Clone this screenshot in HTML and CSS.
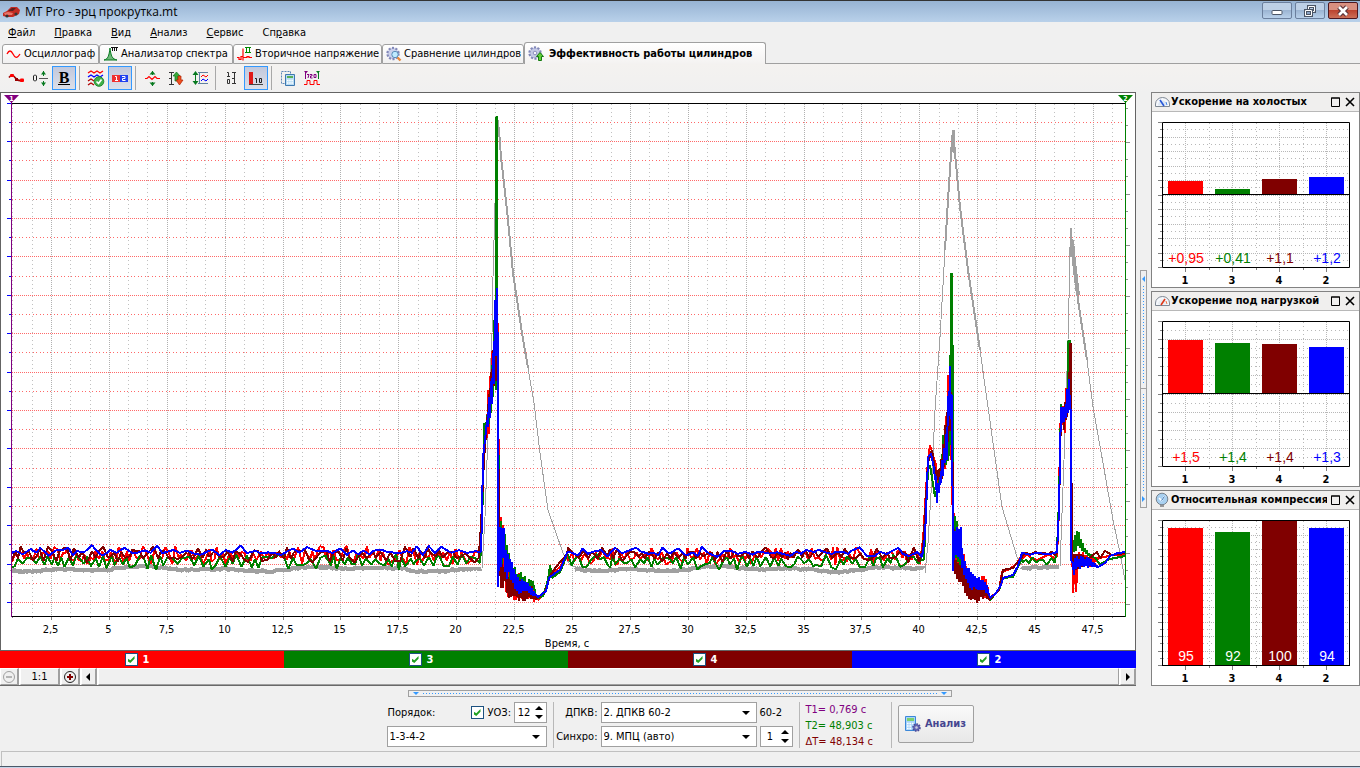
FILE: index.html
```html
<!DOCTYPE html>
<html lang="ru">
<head>
<meta charset="utf-8">
<title>MT Pro - эрц прокрутка.mt</title>
<link rel="stylesheet" href="styles.css">
</head>
<body>
<header class="titlebar">
  <svg class="app-icon" width="18" height="16" viewBox="0 0 18 16"><path d="M1 9l4-2 4-4h6l3 3-1 4-6 3H5l-4-1z" fill="#c22b22"/><path d="M6 7l4-3h4l-3 3z" fill="#5a2020"/><path d="M2 9l4-1 5 1-1 2H3z" fill="#e87468"/><circle cx="5" cy="12" r="1.600" fill="#333"/><circle cx="14" cy="10" r="1.600" fill="#333"/></svg>
  <h1 class="title">MT Pro - эрц прокрутка.mt</h1>
  <div class="window-buttons">
    <button class="win-btn" aria-label="Свернуть"><svg width="12" height="12" viewBox="0 0 12 12"><rect x="1" y="5.500" width="10" height="4" rx="1" fill="#fff" stroke="#4b5566"/></svg></button>
    <button class="win-btn" aria-label="Восстановить"><svg width="12" height="12" viewBox="0 0 12 12"><path d="M4.500 1.500h6v5h-6z" fill="none" stroke="#4b5566" stroke-width="3"/><path d="M4.500 1.500h6v5h-6z" fill="none" stroke="#fff"/><path d="M1.500 5.500h6v5h-6z" fill="#8ba3c4" stroke="#4b5566" stroke-width="3"/><path d="M1.500 5.500h6v5h-6z" fill="none" stroke="#fff"/></svg></button>
    <button class="win-btn close" aria-label="Закрыть"><svg width="12" height="12" viewBox="0 0 12 12"><path d="M2 2l8 8M10 2l-8 8" stroke="#5b3338" stroke-width="5"/><path d="M2 2l8 8M10 2l-8 8" stroke="#fff" stroke-width="2.600"/></svg></button>
  </div>
</header>

<nav class="menu">
  <button class="menu-item"><u>Ф</u>айл</button>
  <button class="menu-item"><u>П</u>равка</button>
  <button class="menu-item"><u>В</u>ид</button>
  <button class="menu-item"><u>А</u>нализ</button>
  <button class="menu-item"><u>С</u>ервис</button>
  <button class="menu-item">Сп<u>р</u>авка</button>
</nav>

<nav class="tabs">
  <button class="tab tab-scope"><svg width="16" height="16" viewBox="0 0 16 16"><path d="M1 8c2-4 4-4 6 0s4 5 7 0" fill="none" stroke="#f00" stroke-width="1.300"/></svg>Осциллограф</button>
  <button class="tab tab-spectrum"><svg width="16" height="16" viewBox="0 0 16 16"><path d="M1 14c4-1 5-4 6-12 1 8 2 11 7 12z" fill="#6fb87a" stroke="#087a20"/><path d="M8 1.500h7M9.500 1v4M11.500 1v4M13.500 1v4" stroke="#111" fill="none"/></svg>Анализатор спектра</button>
  <button class="tab tab-secondary"><svg width="16" height="16" viewBox="0 0 16 16"><path d="M0 11.500h2v2h2v-3h2V2.500v12M6 11.500h4v-1h2v1h3" fill="none" stroke="#f00" stroke-width="1.200"/><path d="M8 1.500h6M8 6.500h6M9.500 1v6M12.500 1v6" stroke="#080"/></svg>Вторичное напряжение</button>
  <button class="tab tab-compare"><svg width="16" height="16" viewBox="0 0 16 16"><circle cx="7" cy="7.500" r="5.400" fill="#b9bfe2" stroke="#8187b8" stroke-width="2.600" stroke-dasharray="2 1.400"/><circle cx="7" cy="7.500" r="4.600" fill="#ccd1ec"/><circle cx="9" cy="8.500" r="3.200" fill="#bfeaff" stroke="#5a8db8"/><path d="M11.500 11.500l3 3" stroke="#e8883a" stroke-width="2.400"/></svg>Сравнение цилиндров</button>
  <button class="tab tab-active"><svg width="16" height="16" viewBox="0 0 16 16"><circle cx="7" cy="7" r="5.400" fill="#b9bfe2" stroke="#8187b8" stroke-width="2.600" stroke-dasharray="2 1.400"/><circle cx="7" cy="7" r="4.600" fill="#c4c9e6"/><circle cx="7" cy="7" r="1.800" fill="#f4f4fb" stroke="#8b90be"/><path d="M12 6.500l3.500 4h-2v4h-3v-4h-2z" fill="#5fd038" stroke="#147a10"/></svg>Эффективность работы цилиндров</button>
  <div class="tabs-rest"></div>
</nav>

<div class="toolbar">
  <button class="tool" aria-label="Кривая"><svg width="18" height="18" viewBox="0 0 18 18"><path d="M2 8.500c2-3 4-3 6 0s4 4 8 2.500" fill="none" stroke="#a00000" stroke-width="1.600"/><rect x="3" y="5" width="4" height="3" rx="1" fill="#f00"/><rect x="13" y="9.500" width="4" height="3.500" rx="1" fill="#f00"/><rect x="8" y="9" width="3" height="3" fill="#900"/></svg></button>
  <button class="tool" aria-label="Ноль"><svg width="18" height="18" viewBox="0 0 18 18"><path d="M3.500 6h1l1 1v4l-1 1h-1l-1-1V7z" fill="none" stroke="#222"/><path d="M8 9.500h9" stroke="#555"/><path d="M12.500 2v5M12.500 12v5" stroke="#087a20"/><path d="M10 5.500l2.500-3.500 2.500 3.500zM10 13.500l2.500 3.500 2.500-3.500z" fill="#087a20"/></svg></button>
  <button class="tool pressed" aria-label="Полужирный"><b class="bold-glyph">B</b></button>
  <span class="sep"></span>
  <button class="tool" aria-label="Кривые"><svg width="18" height="18" viewBox="0 0 18 18"><g fill="none" stroke-width="1.300"><path d="M1 4l3-2 3 2 3-2 3 2 3-2" stroke="#f00"/><path d="M1 8l3-2 3 2 3-2 3 2 3-2" stroke="#00f"/><path d="M1 12l3-2 3 2" stroke="#b00000"/><path d="M1 16l3-2 3 2" stroke="#b00000"/></g><circle cx="12" cy="12.500" r="4.800" fill="#3fb04a" stroke="#238a30"/><path d="M9.500 12.500l2 2 3-4" fill="none" stroke="#fff" stroke-width="1.700"/></svg></button>
  <button class="tool pressed" aria-label="Цилиндры"><svg width="18" height="18" viewBox="0 0 18 18"><path d="M1 6h8v7H1z" fill="#f03030"/><path d="M9 6h8v7H9z" fill="#2040f0"/><path d="M4 7.500h1.500V12M4 11.500h3M11 7.500h3v2h-2.500v2H14.500" stroke="#fff" fill="none"/></svg></button>
  <span class="sep"></span>
  <button class="tool" aria-label="Масштаб по вертикали"><svg width="18" height="18" viewBox="0 0 18 18"><path d="M2 9.500h2l2-2 3 3 3-3 2 2h3" fill="none" stroke="#f00" stroke-width="1.200"/><path d="M9.500 2v4M9.500 13v4" stroke="#087a20"/><path d="M6.500 5.500l3-3.500 3 3.500zM6.500 13.500l3 3.500 3-3.500z" fill="#087a20"/></svg></button>
  <button class="tool" aria-label="Сдвиг"><svg width="18" height="18" viewBox="0 0 18 18"><path d="M4.500 3v12M2 3.500h5M2 9.500h2M2 15.500h5" stroke="#333"/><path d="M6 7l3.500-4L13 7h-2v5H8V7z" fill="#38a838" stroke="#087a20" stroke-width=".700"/><path d="M9 11h2V7h3v4h2l-3.500 5z" fill="#f05020" stroke="#b02000" stroke-width=".700"/></svg></button>
  <button class="tool" aria-label="Диапазон"><svg width="18" height="18" viewBox="0 0 18 18"><path d="M4.500 3v12" stroke="#087a20"/><path d="M1.500 6l3-4 3 4zM1.500 12l3 4 3-4z" fill="#087a20"/><path d="M7 3.500h10M7 14.500h10M8.500 3v12" stroke="#6080a0"/><path d="M10 8l2-2 3 2 2-2" fill="none" stroke="#f00"/><path d="M10 12l2-2 3 2 2-2" fill="none" stroke="#00f"/></svg></button>
  <span class="sep"></span>
  <button class="tool" aria-label="Шкала"><svg width="18" height="18" viewBox="0 0 18 18"><path d="M4 3.500h1.500V7M4 7.500h3M4.500 10.500h2v4h-2zM11.500 3v12M9 3.500h4M9 9.500h2M9 14.500h4" fill="none" stroke="#333"/></svg></button>
  <button class="tool pressed" aria-label="Значения"><svg width="18" height="18" viewBox="0 0 18 18"><path d="M2 3h4v12H2z" fill="#e01818"/><path d="M2 15.500h14" stroke="#444"/><path d="M8 9.500h1.500V14M12.500 9.500h2v4h-2z" stroke="#222" fill="none"/></svg></button>
  <span class="sep"></span>
  <button class="tool" aria-label="Расчёт"><svg width="18" height="18" viewBox="0 0 18 18"><path d="M2.500 2.500h9v12h-9z" fill="none" stroke="#5b87b8" stroke-dasharray="2 1"/><path d="M6.500 5.500h9v11h-9z" fill="#b8dcf4" stroke="#3d78b0"/><path d="M8 7h6v2H8z" fill="#58b058"/><path d="M8 11.500h6M8 14h6" stroke="#fff" stroke-width="1.500" stroke-dasharray="1.500 .700"/></svg></button>
  <button class="tool" aria-label="720 градусов"><svg width="18" height="18" viewBox="0 0 18 18"><path d="M1 2h4L3 4.500z" fill="#800080"/><path d="M2.500 2v8" stroke="#800080"/><path d="M15.500 2v8" stroke="#087a20"/><path d="M13 2h4l-2 2.500z" fill="#087a20"/><path d="M4 5.500h2L5 9M7 5.500h2v1.500H7.500v2h2M11 5.500h2v3h-2z" stroke="#800080" fill="none"/><path d="M1 15.500h3v-4h3v4h4v-4h3v4h3" fill="none" stroke="#f00"/></svg></button>
</div>

<main class="workspace">
  <section class="scope">
    <svg class="scope-chart" id="scope" viewBox="1 93 1134 557" role="img" aria-label="Эффективность работы цилиндров"></svg>
    <div class="legend">
      <label class="legend-item c1"><input type="checkbox" class="check" checked>1</label>
      <label class="legend-item c3"><input type="checkbox" class="check" checked>3</label>
      <label class="legend-item c4"><input type="checkbox" class="check" checked>4</label>
      <label class="legend-item c2"><input type="checkbox" class="check" checked>2</label>
    </div>
    <div class="zoombar">
      <button class="zoom-btn" aria-label="Уменьшить" disabled><svg width="14" height="14" viewBox="0 0 14 14"><circle cx="7" cy="7" r="5.500" fill="none" stroke="#a0a0a0"/><path d="M4 7h6" stroke="#a0a0a0" stroke-width="1.500"/></svg></button>
      <button class="zoom-btn ratio">1:1</button>
      <button class="zoom-btn" aria-label="Увеличить"><svg width="14" height="14" viewBox="0 0 14 14"><circle cx="7" cy="7" r="5.500" fill="none" stroke="#222"/><path d="M4 7h6M7 4v6" stroke="#800000" stroke-width="2"/></svg></button>
      <button class="zoom-btn" aria-label="Влево"><svg width="6" height="8" viewBox="0 0 6 8"><path d="M4 0v8L0 4z"/></svg></button>
      <div class="track"></div>
      <button class="zoom-btn" aria-label="Вправо"><svg width="6" height="8" viewBox="0 0 6 8"><path d="M1 0v8l4-4z"/></svg></button>
    </div>
  </section>

  <div class="v-splitter">
    <div class="v-half up"></div>
    <div class="v-half down"></div>
  </div>

  <aside class="panels">
    <section class="panel">
      <header class="panel-head">
        <svg width="15" height="16" viewBox="0 0 15 16"><path d="M.500 12.500V10a7 6.500 0 0 1 14 0v2.500z" fill="#f4f7fb" stroke="#7f8894"/><path d="M3 11.500a4.500 5 0 0 1 9 0" fill="#dce6f4"/><path d="M5 6l4 6" stroke="#2858d8" stroke-width="1.600"/><path d="M11 8l1 3" stroke="#4888e8"/></svg>
        <h2 class="panel-title">Ускорение на холостых</h2>
        <button class="panel-btn" aria-label="Развернуть"><svg width="10" height="10" viewBox="0 0 10 10"><path d="M.500 1h8v8.500h-8zM0 1h9" fill="none" stroke="#000"/></svg></button>
        <button class="panel-btn" aria-label="Закрыть"><svg width="10" height="10" viewBox="0 0 10 10"><path d="M1 1l8 8M9 1L1 9" stroke="#000" stroke-width="1.600"/></svg></button>
      </header>
      <svg class="panel-chart" id="idle" viewBox="0 0 207 175"></svg>
    </section>
    <section class="panel">
      <header class="panel-head">
        <svg width="15" height="16" viewBox="0 0 15 16"><path d="M.500 12.500V10a7 6.500 0 0 1 14 0v2.500z" fill="#f4f7fb" stroke="#7f8894"/><path d="M3 11.500a4.500 5 0 0 1 9 0" fill="#e8ecf2"/><path d="M10 6l-4 6" stroke="#e03818" stroke-width="1.600"/><path d="M11 8l1 3" stroke="#f07848"/></svg>
        <h2 class="panel-title">Ускорение под нагрузкой</h2>
        <button class="panel-btn" aria-label="Развернуть"><svg width="10" height="10" viewBox="0 0 10 10"><path d="M.500 1h8v8.500h-8zM0 1h9" fill="none" stroke="#000"/></svg></button>
        <button class="panel-btn" aria-label="Закрыть"><svg width="10" height="10" viewBox="0 0 10 10"><path d="M1 1l8 8M9 1L1 9" stroke="#000" stroke-width="1.600"/></svg></button>
      </header>
      <svg class="panel-chart" id="load" viewBox="0 0 207 175"></svg>
    </section>
    <section class="panel">
      <header class="panel-head">
        <svg width="15" height="16" viewBox="0 0 15 16"><path d="M5 12h4v3H5z" fill="#999"/><circle cx="7" cy="7" r="5.800" fill="#a8d0f0" stroke="#78828e"/><path d="M6 9l4-5M4 6l3 3" stroke="#fff" stroke-width="1.600"/><path d="M6.500 8.500l3-4" stroke="#2868b0"/></svg>
        <h2 class="panel-title">Относительная компрессия</h2>
        <button class="panel-btn" aria-label="Развернуть"><svg width="10" height="10" viewBox="0 0 10 10"><path d="M.500 1h8v8.500h-8zM0 1h9" fill="none" stroke="#000"/></svg></button>
        <button class="panel-btn" aria-label="Закрыть"><svg width="10" height="10" viewBox="0 0 10 10"><path d="M1 1l8 8M9 1L1 9" stroke="#000" stroke-width="1.600"/></svg></button>
      </header>
      <svg class="panel-chart" id="compression" viewBox="0 0 207 175"></svg>
    </section>
  </aside>
</main>

<div class="h-splitter"></div>

<form class="controls">
  <div class="group order">
    <div class="row">
      <label class="order-label" for="order">Порядок:</label>
      <input type="checkbox" class="check" id="uoz" checked><label class="uoz-label" for="uoz">УОЗ:</label>
      <span class="spin"><input class="spin-input" type="text" value="12" aria-label="УОЗ"><span class="spin-arrows"><button type="button" class="arrow up" aria-label="Больше"></button><button type="button" class="arrow down" aria-label="Меньше"></button></span></span>
    </div>
    <span class="select"><select id="order"><option>1-3-4-2</option></select></span>
  </div>
  <span class="v-line"></span>
  <div class="group sensors">
    <label for="dpkv">ДПКВ:</label>
    <span class="select"><select id="dpkv"><option>2. ДПКВ 60-2</option></select></span>
    <span class="teeth">60-2</span>
    <label for="sync">Синхро:</label>
    <span class="select"><select id="sync"><option>9. МПЦ (авто)</option></select></span>
    <span class="spin"><input class="spin-input" type="text" value="1" aria-label="Номер цилиндра"><span class="spin-arrows"><button type="button" class="arrow up" aria-label="Больше"></button><button type="button" class="arrow down" aria-label="Меньше"></button></span></span>
  </div>
  <span class="v-line"></span>
  <div class="times">
    <span class="t1">T1= 0,769 с</span>
    <span class="t2">T2= 48,903 с</span>
    <span class="dt">ΔT= 48,134 с</span>
  </div>
  <span class="v-line"></span>
  <button type="button" class="analyze"><svg width="16" height="16" viewBox="0 0 16 16"><path d="M.500.500h10v14H.500z" fill="#a8d4fa" stroke="#3c88d8"/><path d="M2 2h7v3H2z" fill="#7cd06c"/><path d="M2 7.500h7M2 10h5M2 12.500h5" stroke="#fff" stroke-width="1.600" stroke-dasharray="1.600 .800"/><circle cx="11.500" cy="11.500" r="3.300" fill="#6a6ab8" stroke="#4a4a98" stroke-width="2" stroke-dasharray="1.500 1"/><circle cx="11.500" cy="11.500" r="1.200" fill="#ccd"/></svg>Анализ</button>
</form>

<footer class="status"></footer>
<div class="taskbar-edge"></div>
<script src="charts.js"></script>
</body>
</html>
```

FILE: styles.css
```css
* { box-sizing: border-box; }
body {
  margin: 0;
  height: 100vh;
  display: flex;
  flex-direction: column;
  background: #f0f0f0;
  color: #000;
  font: 11px/14px "DejaVu Sans Condensed", "Liberation Sans", sans-serif;
  overflow: hidden;
}
button, input, select { font: inherit; color: inherit; margin: 0; padding: 0; border: 0; background: none; border-radius: 0; }
h1, h2 { margin: 0; font: inherit; }
svg { display: block; flex: none; }

.titlebar {
  display: flex;
  align-items: center;
  height: 22px;
  padding: 0 2px;
  gap: 5px;
  border-top: 1px solid #333;
  background: linear-gradient(#97b3d3, #b9d1ea);
}
.title { flex: 1; font: 12px/16px "Open Sans", "Noto Sans", sans-serif; }
.window-buttons { display: flex; align-self: flex-start; gap: 3px; padding-top: 1px; }
.win-btn {
  width: 30px;
  height: 17px;
  display: flex;
  align-items: center;
  justify-content: center;
  border: 1px solid #6b7f9d;
  border-radius: 2px;
  background: linear-gradient(#bdd0e6 50%, #9cb5d3 50%, #b8d0ea);
}
.win-btn.close { border-color: #4d1820; background: linear-gradient(#d99080 50%, #bc4430 50%, #cc7058); }

.menu { display: flex; gap: 19px; height: 20px; padding: 2px 8px 0; align-items: center; }
.menu-item { line-height: 14px; }
.menu-item u { text-underline-offset: 1px; }

.tabs { display: flex; align-items: flex-end; height: 22px; padding-left: 2px; }
.tab {
  height: 20px;
  display: flex;
  align-items: center;
  gap: 2px;
  padding: 0 3px;
  border: 1px solid #a0a0a0;
  border-radius: 3px 3px 0 0;
  background: linear-gradient(#fff, #f1f0f0);
  white-space: nowrap;
}
.tab-scope { width: 97px; }
.tab-spectrum { width: 134px; }
.tab-secondary { width: 149px; }
.tab-compare { width: 142px; }
.tab-active { width: 242px; height: 22px; gap: 5px; border-bottom: 0; font-weight: bold; background: linear-gradient(#fff, #f4f2f1); }
.tabs-rest { flex: 1; align-self: stretch; border-bottom: 1px solid #a0a0a0; }

.toolbar { display: flex; align-items: center; height: 28px; padding: 0 4px; background: linear-gradient(#f4f2f0, #f0f0f0); }
.tool { width: 24px; height: 24px; display: flex; align-items: center; justify-content: center; }
.tool.pressed { border: 1px solid #3399ff; background: linear-gradient(#c2c8dc, #dcdfe8); }
.bold-glyph { width: 12px; font: bold 16px/13px "Liberation Serif", serif; border-bottom: 1px solid #000; }
.sep { width: 1px; height: 24px; margin: 0 4px 0 3px; background: #a8a8a8; }

.workspace { flex: 1; min-height: 0; display: flex; }
.scope { flex: 1; min-width: 0; display: flex; flex-direction: column; }
.scope-chart { flex: 1; min-height: 0; width: 100%; background: #fff; border: 1px solid #646464; }
.legend { display: flex; height: 17px; }
.legend-item { flex: 1; display: flex; align-items: center; justify-content: center; gap: 5px; padding-right: 10px; color: #fff; font-weight: bold; }
.c1 { background: #f00; }
.c3 { background: #008000; }
.c4 { background: #800000; }
.c2 { background: #00f; }
.check { appearance: none; width: 13px; height: 13px; flex: none; border: 1px solid #1c5180; background: #fff; }
.check:checked::before {
  content: "";
  display: block;
  width: 7px;
  height: 7px;
  margin: 2px;
  background: #21a121;
  clip-path: polygon(0 35%, 40% 60%, 100% 0, 100% 40%, 40% 100%, 0 75%);
}
.zoombar { display: flex; gap: 1px; height: 18px; background: #fff; border-bottom: 1px solid #696969; }
.zoom-btn { width: 19px; display: flex; align-items: center; justify-content: center; background: #f0f0f0; border: 1px solid #fff; border-right: 2px solid #a0a0a0; border-bottom-color: #a0a0a0; }
.zoom-btn:nth-child(n+4) { width: 16px; }
.zoom-btn.ratio { width: 40px; }
.track { flex: 1; background: #f0f0f0; border: 1px solid #a0a0a0; border-color: #fff #a0a0a0 #a0a0a0 #fff; }

.v-splitter { width: 15px; padding: 0 4px; display: flex; flex-direction: column; justify-content: center; }
.v-half { height: 119px; border: 1px solid #a0a0a0; display: flex; flex-direction: column; align-items: center; gap: 4px; padding: 5px 0; }
.v-half.down { border-top: 0; flex-direction: column-reverse; }
.v-half::before { content: ""; border: 3px solid transparent; border-left: 0; border-right-color: #3399ff; }
.v-half.down::before { border: 3px solid transparent; border-right: 0; border-left-color: #3399ff; }
.v-half::after { content: ""; flex: 1; width: 1px; background: linear-gradient(#3399ff 1px, transparent 1px) 0 0 / 1px 3px repeat-y; }

.panels { width: 209px; display: flex; flex-direction: column; gap: 3px; }
.panel { flex: 1; min-height: 0; display: flex; flex-direction: column; background: #fff; border: 1px solid #828282; }
.panel-head { display: flex; align-items: center; height: 19px; padding: 0 4px 0 3px; background: #f0efee; border-bottom: 1px solid #b8b8b8; }
.panel-title { flex: 1; min-width: 0; margin-left: 1px; overflow: hidden; white-space: nowrap; font-weight: bold; }
.panel-btn { margin-left: 4px; }
.panel-chart { flex: 1; min-height: 0; width: 100%; }

.h-splitter {
  width: 40%;
  height: 7px;
  margin: 4px auto;
  padding: 0 14px;
  display: flex;
  align-items: center;
  justify-content: space-between;
  border: 1px solid #a0a0a0;
  background: linear-gradient(90deg, #3399ff 1px, transparent 1px) 0 2px / 3px 1px repeat-x content-box;
}
.h-splitter::before, .h-splitter::after { content: ""; margin: 0 -10px; border: 3px solid transparent; border-bottom: 0; border-top-color: #3399ff; }

.controls { display: flex; justify-content: center; height: 50px; padding-top: 1px; gap: 6px; }
.group { align-content: start; }
.order { width: 160px; display: grid; gap: 3px; }
.row { display: flex; align-items: center; }
.order-label { flex: 1; padding-left: 1px; }
.uoz-label { width: 30px; padding-left: 4px; }
.spin { display: flex; width: 33px; height: 21px; padding: 2px 2px 2px 0; background: #fff; border: 1px solid #a0a0a0; }
.spin-input { flex: 1; min-width: 0; text-align: center; outline: 0; }
.spin-arrows { display: flex; flex-direction: column; justify-content: center; gap: 5px; width: 10px; align-items: center; }
.arrow { border: 4px solid transparent; }
.arrow.up { border-top: 0; border-bottom-color: #000; }
.arrow.down { border-bottom: 0; border-top-color: #000; }
.select { position: relative; display: flex; height: 21px; background: #fff; border: 1px solid #a0a0a0; }
.select select { flex: 1; min-width: 0; appearance: none; padding-left: 2px; outline: 0; }
.select::after { content: ""; position: absolute; right: 6px; top: 8px; border: 4px solid transparent; border-bottom: 0; border-top-color: #000; pointer-events: none; }
.sensors { display: grid; grid-template-columns: 38px 156px 33px; column-gap: 3px; row-gap: 3px; align-items: center; text-align: right; white-space: nowrap; }
.sensors .teeth { text-align: left; }
.sensors label { justify-self: end; }
.v-line { width: 1px; height: 46px; background: #b8b8b8; }
.times { width: 79px; display: flex; flex-direction: column; line-height: 16px; white-space: nowrap; }
.t1 { color: #800080; }
.t2 { color: #008000; }
.dt { color: #800000; }
.analyze {
  width: 76px;
  height: 38px;
  margin-top: 3px;
  display: flex;
  align-items: center;
  justify-content: center;
  gap: 4px;
  border: 1px solid #a0a0a0;
  border-radius: 2px;
  background: linear-gradient(#fafafa, #e8e8e8);
  color: #464690;
  font-weight: bold;
}

.status { height: 15px; margin-left: 1px; border: 1px solid #c0c0c0; border-width: 1px 0 0 1px; }
.taskbar-edge { height: 2px; border-top: 1px solid #4a5868; background: #c5d5e8; }

.rule { shape-rendering: crispEdges; }
.frame { fill: none; stroke: #000; }
.axis-text { font-size: 11px; text-anchor: middle; }
.marker-text { font-size: 7px; font-weight: bold; fill: #fff; text-anchor: middle; }
.value-text { font: 14px "Liberation Sans", sans-serif; text-anchor: middle; }
.number-text { font-size: 11px; font-weight: bold; text-anchor: middle; }
```

FILE: charts.js
```js
const NS = 'http://www.w3.org/2000/svg';

function add(parent, name, attrs, text) {
  const node = document.createElementNS(NS, name);
  for (const key in attrs) node.setAttribute(key, attrs[key]);
  if (text !== undefined) node.textContent = text;
  parent.appendChild(node);
  return node;
}

function line(parent, x1, y1, x2, y2, stroke, dash) {
  const attrs = { d: `M${x1} ${y1}L${x2} ${y2}`, stroke, fill: 'none', class: 'rule' };
  if (dash) attrs['stroke-dasharray'] = dash;
  add(parent, 'path', attrs);
}

// Pixel centre of a coordinate, for crisp one-pixel lines
const snap = v => Math.floor(v) + 0.5;

let seed = 7;
function random() {
  seed = (seed * 16807) % 2147483647;
  return seed / 2147483647;
}

// Points are [x, top, bottom]; the trace swings inside that band.
function burst(points, step) {
  const out = [];
  let high = true;
  for (let i = 0; i < points.length; i++) {
    const [x0, t0, b0 = t0] = points[i];
    if (b0 === t0) out.push([x0, t0]);
    if (i === points.length - 1) break;
    const [x1, t1, b1 = t1] = points[i + 1];
    if (b0 === t0 && b1 === t1) continue;
    for (let x = x0; x < x1; x += step) {
      const k = (x - x0) / (x1 - x0);
      const t = t0 + (t1 - t0) * k;
      const b = b0 + (b1 - b0) * k;
      const inset = (b - t) * 0.25 * random();
      out.push([x, high ? t + inset : b - inset]);
      high = !high;
    }
  }
  return out;
}

// Idle stretch: wandering around a level with occasional larger swings
function idle(from, to, level, up, down, step, calm = 0.5) {
  const out = [];
  let above = true;
  for (let x = from; x < to; x += step * (0.6 + random() * 0.8)) {
    if (random() < 0.75) above = !above;
    const size = (0.3 + 0.7 * random()) * (random() < 0.4 ? 1 : calm);
    out.push([x, level + (above ? -up : down) * size]);
  }
  return out;
}

// Average speed: a slow drift with a fine ripple
function drift(from, to, level) {
  const out = [];
  for (let x = from; x < to; x += 1) {
    const slow = Math.sin(x / 13) * 1.2 + Math.sin(x / 31) * 1.6;
    out.push([x, level + slow + (random() - 0.5) * 2.4]);
  }
  return out;
}

function trace(parent, points, stroke, width) {
  add(parent, 'polyline', {
    points: points.map(p => p[0].toFixed(1) + ',' + p[1].toFixed(1)).join(' '),
    fill: 'none', stroke, 'stroke-width': width, 'stroke-linejoin': 'bevel', 'shape-rendering': 'crispEdges'
  });
}

function drawScope() {
  const svg = document.getElementById('scope');
  const left = 11.5, right = 1125.5, top = 103.5, bottom = 616.5;
  const perSecond = 23.155;
  const X = t => 51.5 + (t - 2.5) * perSecond;

  for (let i = 1; i <= 58; i++) {
    const x = snap(X(i * 2.5 / 3));
    if (x > right) break;
    const major = i % 3 === 0;
    line(svg, x, 104, x, 616, major ? '#b0b0b0' : '#c0c0c0', major ? '1 1' : '1 3');
    line(svg, x, 616, x, major ? 620 : 618, '#808080');
    if (major) add(svg, 'text', { x: x - 1, y: 633, class: 'axis-text' }, String(i / 3 * 2.5).replace('.', ','));
  }
  for (let i = 0; i < 26; i++) {
    const y = snap(602.5 - i * 19.2);
    const major = i % 2 === 0;
    line(svg, 12, y, 1125, y, '#ff6868', major ? '1 1' : '1 2 1 3');
    line(svg, major ? 7 : 9, y, 11, y, '#0000ff');
  }
  for (let i = 0; i < 30; i++) {
    const y = snap(604.5 - i * 17.1);
    line(svg, 1126, y, i % 3 ? 1128 : 1130, y, '#909090');
  }
  add(svg, 'text', { x: 567, y: 647, class: 'axis-text' }, 'Время, с');
  line(svg, 11, top, 1126, top, '#000');
  line(svg, 11, bottom, 1126, bottom, '#000');

  const gray = '#a0a0a0';
  trace(svg, drift(12, 482, 569), gray, 4);
  trace(svg, drift(575, 925, 569), gray, 4);
  trace(svg, drift(1022, 1060, 567), gray, 4);
  trace(svg, [[482,568],[485,517],[488,433],[492,333],[493,277],[495,203],[497,117],[499,127],[501,157],[507,210],[513,273],[522,333],[534,403],[540,453],[548,510],[563,553],[570,565],[576,567]], gray, 1);
  trace(svg, [[497,117],[499,130],[501,157],[507,210],[513,273],[522,333],[528,368]], gray, 2);
  trace(svg, [[925,573],[928,543],[932,477],[935,410],[940,337],[945,250],[948,200],[953,130],[955,153],[960,207],[968,270],[980,350],[988,407],[995,457],[1002,507],[1017,557],[1022,565]], gray, 1);
  trace(svg, [[945,250],[948,200],[952,140],[953,130],[955,153],[960,207],[968,270],[980,350]], gray, 2);
  trace(svg, [[953,130],[953,150],[955,153]], gray, 3);
  trace(svg, [[1060,567],[1063,487],[1065,433],[1068,340],[1070,257],[1071,228],[1073,250],[1078,297],[1087,360],[1093,407],[1103,463],[1113,520],[1120,553],[1125,580]], gray, 1);
  trace(svg, [[1070,257],[1071,238],[1074,265],[1078,300],[1087,360]], gray, 2);
  trace(svg, [[1072,240],[1074,262],[1078,295]], gray, 4);

  trace(svg, [
    ...idle(12, 480, 556, 10, 9, 3),
    ...burst([[481,545],[483,470],[486,425],[487,394,445],[490,372,430],[493,325,385],[496,300,370],[499,310,375]], 1),
    ...burst([[499,550],[500,507,590],[503,520,560],[505,560,598],[512,570,600],[527,577,600],[535,590,602],[538,600],[545,592],[550,575],[560,567],[567,553]], 1),
    ...idle(568, 921, 556, 9, 9, 3),
    ...burst([[923,540],[926,490],[928,460],[930,445],[932,452],[936,465],[938,480,495],[941,460,484],[944,436,475],[947,400,460],[949,347,420],[951,350,440],[952,500]], 1),
    ...burst([[954,500,570],[958,530,575],[963,550,585],[970,575,600],[980,575,600],[987,576,600],[990,598],[999,590],[1002,572],[1010,569],[1017,563],[1022,555]], 1),
    ...idle(1023, 1056, 557, 4, 4, 4),
    ...burst([[1057,556],[1059,510],[1060,425],[1062,400,425],[1065,402,435],[1067,370,425],[1069,350,410],[1071,362,410]], 1),
    [1072,540],[1073,593],[1074,560],[1076,592],[1078,556],
    ...burst([[1079,550,568],[1090,555,568],[1100,558],[1113,555],[1125,555]], 1)
  ], '#ff0000', 2);

  trace(svg, [
    ...idle(12, 480, 561, 8, 9, 4, 0.7),
    ...burst([[481,550],[483,490],[484,424],[486,423],[488,400,435],[491,375,415],[493,340,400],[495,276,385]], 1),
    [496,390],[496,117],[497,117],[497,385],[498,380],
    ...burst([[499,515,575],[504,525,560],[510,557,585],[517,568,595],[527,578,597],[534,580,590],[536,599],[543,596],[548,580],[550,565],[552,578],[560,572],[567,555]], 1),
    ...idle(568, 922, 561, 7, 9, 4, 0.7),
    ...burst([[924,560],[926,510],[928,470],[930,465],[934,490],[935,497],[940,470,488],[944,422,470],[947,410,480],[949,360,450]], 1),
    [950,440],[951,274],[952,274],[952,440],[953,345],[953,540],
    ...burst([[955,505,560],[963,555,580],[970,575,590],[980,578,594],[987,588,596],[990,600],[999,590],[1003,578],[1013,577],[1022,559]], 1),
    ...idle(1023, 1056, 561, 4, 4, 4),
    ...burst([[1057,550],[1059,500],[1061,404],[1064,410,432],[1066,400,437]], 1),
    [1068,400],[1068,341],[1070,341],[1070,380],[1071,400],[1071,545],
    ...burst([[1073,537,555],[1075,530,553],[1078,528,552],[1082,540,552],[1088,552,556],[1095,558],[1100,564],[1110,559],[1125,556]], 1)
  ], '#008000', 2);

  trace(svg, [
    ...idle(12, 480, 555, 9, 8, 4),
    ...burst([[481,525],[484,460],[487,420],[490,378,405],[493,346,390],[496,310,385],[499,296,372],[499,575]], 1),
    ...burst([[500,560,592],[506,567,585],[508,575,601],[525,582,602],[533,585,600],[536,599],[545,592],[550,576],[556,567],[567,554]], 1),
    ...idle(568, 921, 555, 8, 8, 4),
    ...burst([[923,548],[926,500],[928,462],[932,450],[935,470],[938,470,482],[942,455,480],[944,432,475],[948,394,445],[952,387,430],[953,500]], 1),
    ...burst([[954,553,577],[958,560,580],[962,565,590],[970,580,600],[977,590,604],[985,580,598],[989,600],[999,590],[1003,570],[1013,568],[1022,557]], 1),
    ...idle(1023, 1056, 553, 2, 4, 4),
    ...burst([[1057,553],[1059,510],[1061,412],[1064,410,434],[1067,385,425]], 1),
    [1069,400],[1070,344],[1071,344],[1071,410],[1072,555],
    ...burst([[1073,552,572],[1083,554,566],[1088,559],[1097,552],[1100,558],[1105,551],[1112,555],[1125,553]], 1)
  ], '#800000', 2);

  trace(svg, [
    ...idle(12, 479, 552, 7, 4, 6, 0.3),
    ...burst([[481,552],[482,515],[483,457],[485,440],[487,420],[488,398,430],[490,387,425],[493,350,402],[494,305,385],[496,285,372],[498,285,372],[498,373],[498,587]], 1),
    ...burst([[500,525,575],[504,527,560],[506,548,590],[509,553,575],[513,558,590],[518,577,595],[527,579,592],[533,588,597],[538,597],[546,591],[549,578],[555,573],[560,570],[567,553]], 1),
    ...idle(568, 921, 553, 6, 4, 6, 0.3),
    ...burst([[922,557],[925,537],[927,487],[928,458],[931,453],[934,468],[937,480,503],[940,475,493],[943,450,478],[947,420,465],[949,363,425],[951,362,430],[952,387,480],[953,571]], 1),
    ...burst([[955,527,563],[958,524,558],[961,524,560],[963,553,577],[970,570,590],[980,577,592],[987,584,593],[990,598],[996,593],[1001,585],[1003,578],[1013,575],[1018,566],[1022,553]], 1),
    ...idle(1023, 1056, 554, 2, 1, 6),
    ...burst([[1057,552],[1059,510],[1061,407],[1062,403,427],[1065,403,425],[1068,377,418],[1070,367,410],[1071,410],[1071,560]], 1),
    ...burst([[1073,560,580],[1076,555,570],[1090,557,568],[1098,567],[1105,563],[1110,556],[1118,553],[1126,552]], 1)
  ], '#0000ff', 2);

  line(svg, left, 96, left, bottom, '#800080');
  line(svg, right, 96, right, bottom, '#008000');
  line(svg, 7, top, 11, top, '#0000ff');
  add(svg, 'path', { d: 'M4 95h15l-7.500 8z', fill: '#800080' });
  add(svg, 'path', { d: 'M1118 95h15l-7.500 8z', fill: '#008000' });
  add(svg, 'text', { x: 11.5, y: 101, class: 'marker-text' }, '1');
  add(svg, 'text', { x: 1125.5, y: 101, class: 'marker-text' }, '2');
}

const COLORS = ['#ff0000', '#008000', '#800000', '#0000ff'];
const NUMBERS = ['1', '3', '4', '2'];

function drawBars(id, { tops, base, values, divisions, inside }) {
  const svg = document.getElementById(id);
  const left = 10.5, right = 197.5, top = 10.5, bottom = 155.5;
  const step = (bottom - top) / divisions;
  for (let i = 0; i <= divisions; i++) {
    const y = snap(top + i * step);
    const major = i % 2 === 0;
    if (i && i < divisions) line(svg, 11, y, 197, y, '#b8b8b8', major ? '1 1' : '1 3');
    line(svg, major ? 6 : 8, y, 10, y, '#808080');
  }
  for (let i = 0; i < 7; i++) {
    const x = snap(33.5 + i * 23.5);
    const major = i % 2 === 0;
    line(svg, x, 11, x, 155, '#b8b8b8', major ? '1 1' : '1 3');
    line(svg, x, 156, x, major ? 160 : 158, '#808080');
  }
  tops.forEach((y, i) => {
    add(svg, 'rect', { x: 16 + i * 47, y, width: 35, height: base - y, fill: COLORS[i] });
  });
  line(svg, 10, base + 0.5, 198, base + 0.5, '#000');
  add(svg, 'path', { d: `M${left} ${top}H${right}V${bottom}H${left}Z`, class: 'frame' });
  values.forEach((text, i) => {
    const x = 34 + i * 47;
    add(svg, 'text', { x, y: 151, class: 'value-text', fill: inside ? '#fff' : COLORS[i] }, text);
    add(svg, 'text', { x: x - 1, y: 172, class: 'number-text' }, NUMBERS[i]);
  });
}

drawScope();
drawBars('idle', { tops: [69, 77, 67, 65], base: 82, values: ['+0,95', '+0,41', '+1,1', '+1,2'], divisions: 20 });
drawBars('load', { tops: [29, 32, 33, 36], base: 82, values: ['+1,5', '+1,4', '+1,4', '+1,3'], divisions: 16 });
drawBars('compression', { tops: [18, 22, 11, 18], base: 155, values: ['95', '92', '100', '94'], divisions: 20, inside: true });
```
